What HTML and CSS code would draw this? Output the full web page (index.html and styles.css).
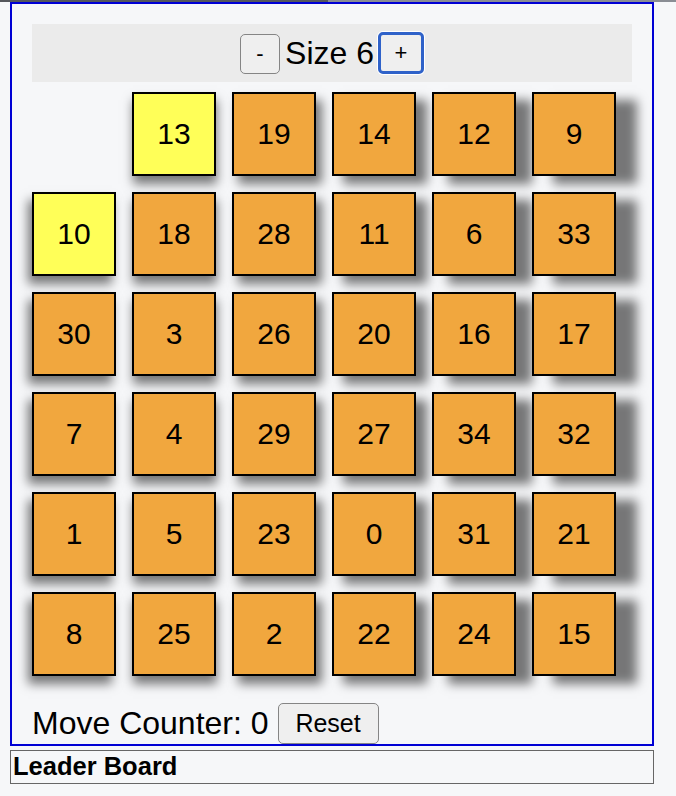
FILE: index.html
```html
<!DOCTYPE html>
<html>
<head>
<meta charset="utf-8">
<link rel="stylesheet" href="styles.css">
</head>
<body>
<div class="topbar"></div>
<div class="game">
  <div class="header">
    <button class="btn minus">-</button>
    <span class="size">Size 6</span>
    <button class="btn plus">+</button>
  </div>
  <div class="board">
    <div class="cell blank"></div>
    <div class="tile near c2">13</div>
    <div class="tile c3">19</div>
    <div class="tile c4">14</div>
    <div class="tile c5">12</div>
    <div class="tile c6">9</div>

    <div class="tile near c1">10</div>
    <div class="tile c2">18</div>
    <div class="tile c3">28</div>
    <div class="tile c4">11</div>
    <div class="tile c5">6</div>
    <div class="tile c6">33</div>

    <div class="tile c1">30</div>
    <div class="tile c2">3</div>
    <div class="tile c3">26</div>
    <div class="tile c4">20</div>
    <div class="tile c5">16</div>
    <div class="tile c6">17</div>

    <div class="tile c1">7</div>
    <div class="tile c2">4</div>
    <div class="tile c3">29</div>
    <div class="tile c4">27</div>
    <div class="tile c5">34</div>
    <div class="tile c6">32</div>

    <div class="tile c1">1</div>
    <div class="tile c2">5</div>
    <div class="tile c3">23</div>
    <div class="tile c4">0</div>
    <div class="tile c5">31</div>
    <div class="tile c6">21</div>

    <div class="tile c1">8</div>
    <div class="tile c2">25</div>
    <div class="tile c3">2</div>
    <div class="tile c4">22</div>
    <div class="tile c5">24</div>
    <div class="tile c6">15</div>
  </div>
  <div class="counter">
    <span class="count-text">Move Counter: 0</span>
    <button class="btn reset">Reset</button>
  </div>
</div>
<div class="leader">Leader Board</div>
</body>
</html>
```

FILE: styles.css
```css
html, body {
  margin: 0;
  padding: 0;
  background: #f6f7f9;
  font-family: "Liberation Sans", Arial, sans-serif;
  color: #000;
}

.topbar {
  height: 2px;
  background: linear-gradient(to right, #55575c 0, #55575c 328px, #8a8d94 328px, #8a8d94 100%);
}

.game {
  box-sizing: border-box;
  width: 644px;
  margin-left: 10px;
  border: 2px solid #0000d4;
  padding: 20px 20px 0 20px;
}

.header {
  height: 58px;
  background: #ebebeb;
  display: flex;
  align-items: center;
  justify-content: center;
}

.size {
  font-size: 32px;
  margin: 0 4px 0 5px;
  line-height: 40px;
}

.btn {
  box-sizing: border-box;
  font-family: "Liberation Sans", Arial, sans-serif;
  background: #efefef;
  border: 1.5px solid #858585;
  border-radius: 5px;
  color: #000;
  padding: 0;
  cursor: pointer;
}

.minus {
  width: 40px;
  height: 40px;
  font-size: 22px;
  margin-top: 1px;
}

.plus {
  width: 46px;
  height: 42px;
  font-size: 22px;
  border: 3px solid #2f62c9;
  box-shadow: 0 0 0 1px #ffffff;
}

.board {
  margin-top: 10px;
  display: grid;
  grid-template-columns: repeat(6, 84px);
  grid-auto-rows: 84px;
  gap: 16px;
}

.tile {
  box-sizing: border-box;
  width: 84px;
  height: 84px;
  border: 2px solid #000;
  background: #f1a73e;
  display: flex;
  align-items: center;
  justify-content: center;
  font-size: 30px;
}

.tile.near {
  background: #ffff58;
}

.c1 { box-shadow: -4px 8px 10px rgba(0, 0, 0, 0.52); }
.c2 { box-shadow: 1px 8px 10px rgba(0, 0, 0, 0.52); }
.c3 { box-shadow: 6px 8px 10px rgba(0, 0, 0, 0.52); }
.c4 { box-shadow: 11px 8px 10px rgba(0, 0, 0, 0.52); }
.c5 { box-shadow: 16px 8px 10px rgba(0, 0, 0, 0.52); }
.c6 { box-shadow: 21px 8px 10px rgba(0, 0, 0, 0.52); }

.counter {
  margin-top: 27px;
  height: 41px;
  display: flex;
  align-items: center;
}

.count-text {
  font-size: 32px;
  line-height: 41px;
  margin-left: 0;
}

.reset {
  margin-left: 9px;
  width: 101px;
  height: 41px;
  font-size: 25px;
}

.leader {
  box-sizing: border-box;
  width: 644px;
  height: 34px;
  margin: 4px 0 0 10px;
  border: 1px solid #666;
  font-weight: bold;
  font-size: 25.5px;
  line-height: 31px;
  padding-left: 2px;
}
```
